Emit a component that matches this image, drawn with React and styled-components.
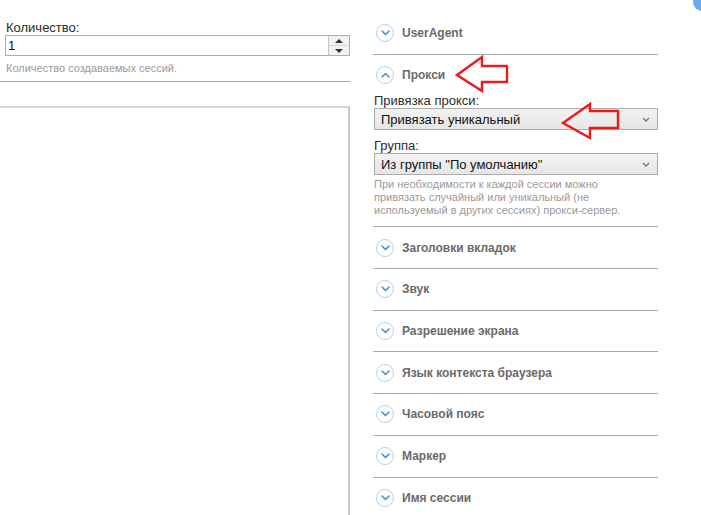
import React from 'react'
import styled, { createGlobalStyle } from 'styled-components'

const GlobalStyle = createGlobalStyle`
  html, body {
    margin: 0;
    padding: 0;
    background: #fff;
  }
  body {
    font-family: "Liberation Sans", Arial, sans-serif;
    color: #333;
  }
`

const sections = [
  'Заголовки вкладок',
  'Звук',
  'Разрешение экрана',
  'Язык контекста браузера',
  'Часовой пояс',
  'Маркер',
  'Имя сессии',
]

const Chevron = ({ up }) => (
  <svg width="9" height="6" viewBox="0 0 9 6">
    <path
      d={up ? 'M1 5 L4.5 1.5 L8 5' : 'M1 1 L4.5 4.5 L8 1'}
      fill="none"
      stroke="#4a8fd6"
      strokeWidth="1.6"
      strokeLinecap="round"
      strokeLinejoin="round"
    />
  </svg>
)

const Arrow = ({ left, top, width, height, points }) => (
  <ArrowSvg style={{ left, top }} width={width} height={height} viewBox={`0 0 ${width} ${height}`}>
    <polygon points={points} fill="none" stroke="#ec1b1b" strokeWidth="2.4" strokeLinejoin="miter" />
  </ArrowSvg>
)

const SectionHeader = ({ title, open }) => (
  <Header>
    <Toggle><Chevron up={open} /></Toggle>
    <HeaderTitle>{title}</HeaderTitle>
  </Header>
)

const Select = ({ value }) => (
  <Combo>
    <span>{value}</span>
    <svg width="8" height="5" viewBox="0 0 8 5">
      <path d="M1 1 L4 4 L7 1" fill="none" stroke="#777" strokeWidth="1.3" />
    </svg>
  </Combo>
)

export default function App() {
  return (
    <Page>
      <GlobalStyle />
      <LeftColumn>
        <Label>Количество:</Label>
        <NumberField>
          <NumberValue>1</NumberValue>
          <Spinner>
            <SpinButton><Triangle /></SpinButton>
            <SpinButton><Triangle down /></SpinButton>
          </Spinner>
        </NumberField>
        <Hint $indent>Количество создаваемых сессий.</Hint>
        <Divider />
        <EmptyPanel />
      </LeftColumn>

      <RightColumn>
        <Section $first>
          <SectionHeader title="UserAgent" />
        </Section>
        <Section>
          <SectionHeader title="Прокси" open />
          <SectionBody>
            <Label>Привязка прокси:</Label>
            <Select value="Привязать уникальный" />
            <Label $gap>Группа:</Label>
            <Select value={'Из группы "По умолчанию"'} />
            <Hint>
              При необходимости к каждой сессии можно привязать случайный или уникальный (не
              используемый в других сессиях) прокси-сервер.
            </Hint>
          </SectionBody>
        </Section>
        {sections.map(title => (
          <Section key={title}>
            <SectionHeader title={title} />
          </Section>
        ))}
      </RightColumn>

      <Arrow left={455} top={55} width={55} height={38} points="2,20 27,2 27,11 52,11 52,27 27,27 27,36" />
      <Arrow left={561} top={102} width={59} height={38} points="2,21 29,2 29,9 57,9 57,26 29,26 29,36" />
      <CornerDot />
    </Page>
  )
}

const Page = styled.div`
  position: relative;
  display: flex;
  width: 701px;
  height: 515px;
  overflow: hidden;
`

const LeftColumn = styled.div`
  display: flex;
  flex-direction: column;
  width: 350px;
  padding-top: 21px;
  box-sizing: border-box;
`

const RightColumn = styled.div`
  width: 285px;
  margin-left: 23px;
  padding-top: 13px;
`

const Label = styled.div`
  font-size: 13px;
  line-height: 14px;
  color: #2b2b2b;
  padding-left: 1px;
  margin-top: ${p => (p.$gap ? '9px' : '0')};
  ${LeftColumn} & {
    padding-left: 6px;
  }
`

const NumberField = styled.div`
  display: flex;
  height: 21px;
  margin-left: 5px;
  border: 1px solid #abadb3;
  box-sizing: border-box;
`

const NumberValue = styled.div`
  flex: 1;
  font-size: 13px;
  line-height: 19px;
  padding-left: 2px;
  color: #111;
`

const Spinner = styled.div`
  display: flex;
  flex-direction: column;
  width: 20px;
  border-left: 1px solid #c6c6c6;
`

const SpinButton = styled.div`
  flex: 1;
  display: flex;
  align-items: center;
  justify-content: center;
  background: #f2f2f2;
  & + & {
    border-top: 1px solid #d6d6d6;
  }
`

const Triangle = styled.span`
  width: 0;
  height: 0;
  border-left: 4px solid transparent;
  border-right: 4px solid transparent;
  ${p => (p.down ? 'border-top: 4px solid #333;' : 'border-bottom: 4px solid #333;')}
`

const Hint = styled.div`
  font-size: 11px;
  line-height: 13px;
  color: #9a9a9a;
  margin-top: ${p => (p.$indent ? '6px' : '3px')};
  padding-left: ${p => (p.$indent ? '6px' : '1px')};
  padding-right: 30px;
`

const Divider = styled.div`
  margin-top: 6px;
  border-top: 1px solid #a3a3a3;
`

const EmptyPanel = styled.div`
  flex: 1;
  margin-top: 24px;
  border-top: 2px solid #d6d6d6;
  border-right: 2px solid #c9c9c9;
`

const Section = styled.section`
  border-top: ${p => (p.$first ? 'none' : '1px solid #a9a9a9')};
`

const Header = styled.div`
  display: flex;
  align-items: center;
  gap: 8px;
  height: 40.7px;
  padding-left: 3px;
`

const Toggle = styled.span`
  display: flex;
  align-items: center;
  justify-content: center;
  width: 16px;
  height: 16px;
  border: 1.5px solid #b0d2f0;
  border-radius: 50%;
`

const HeaderTitle = styled.span`
  font-size: 12px;
  font-weight: bold;
  color: #6a6a6a;
`

const SectionBody = styled.div`
  margin-top: -1px;
  padding-bottom: 9px;
`

const Combo = styled.div`
  display: flex;
  align-items: center;
  justify-content: space-between;
  height: 22px;
  margin-left: 1px;
  padding: 0 7px 0 6px;
  border: 1px solid #acacac;
  box-sizing: border-box;
  background: linear-gradient(#f2f2f2, #e6e6e6);
  font-size: 13px;
  color: #111;
`

const ArrowSvg = styled.svg`
  position: absolute;
`

const CornerDot = styled.span`
  position: absolute;
  left: 693px;
  top: -7px;
  width: 18px;
  height: 18px;
  border-radius: 50%;
  background: #6aaae6;
`
